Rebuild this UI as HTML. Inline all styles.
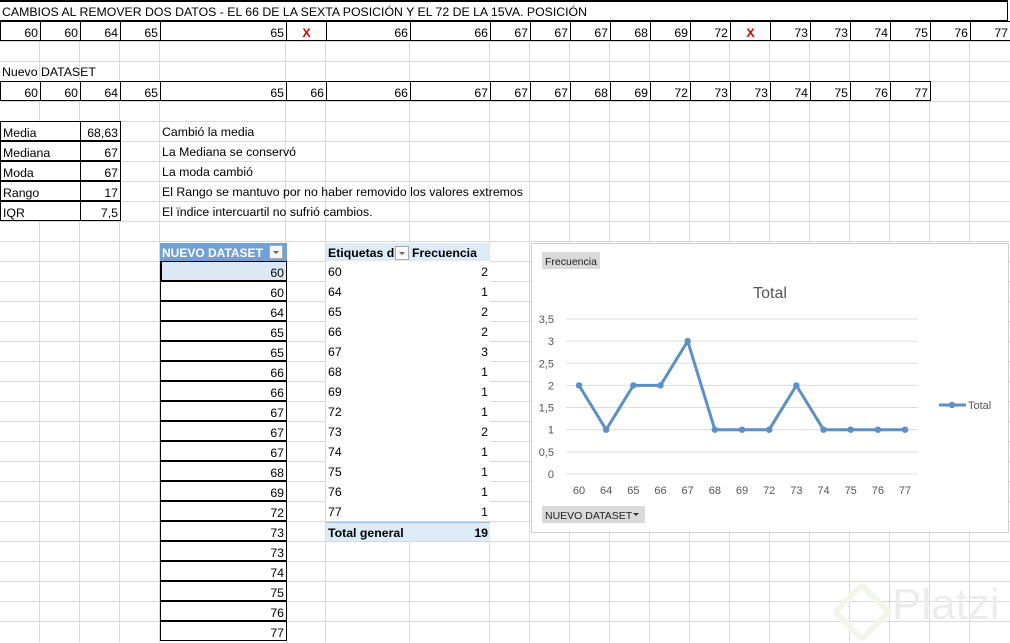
<!DOCTYPE html>
<html><head><meta charset="utf-8">
<style>
html,body{margin:0;padding:0;}
body{width:1010px;height:642px;position:relative;overflow:hidden;background:#fff;font-family:"Liberation Sans",Arial,sans-serif;font-size:12.3px;color:#000;}
.v{position:absolute;top:0;width:1px;height:642px;background:#d9d9d9;}
.h{position:absolute;left:0;height:1px;width:1010px;background:#d9d9d9;}
.c{position:absolute;height:20px;line-height:23px;box-sizing:border-box;white-space:nowrap;overflow:hidden;}
.r{text-align:right;padding-right:2px;}
.l{padding-left:2px;}
.b{border:1px solid #000;}
</style></head><body>
<div id="g"></div>
<script>
var X=[0,40,80,120,160,286,326,410,490,530,570,610,650,690,730,770,810,850,890,930,970,1010];
var g=document.getElementById('g'),h='';
for(var i=1;i<X.length-1;i++)h+='<div class="v" style="left:'+(X[i]-1)+'px"></div>';
for(var y=22;y<642;y+=20)h+='<div class="h" style="top:'+(y-1)+'px"></div>';
function cell(c1,c2,row,txt,cls,st){var top=2+20*(row-1);h+='<div class="c '+(cls||'')+'" style="left:'+X[c1]+'px;width:'+(X[c2]-X[c1]+1)+'px;top:'+(top-1)+'px;'+(st||'')+'">'+txt+'</div>';}
h+='<div style="position:absolute;left:0;top:0;width:1008px;height:21px;border-top:2px solid #000;border-bottom:1px solid #000;border-right:1px solid #000;background:#fff;box-sizing:border-box"></div>';
h+='<div class="c l" style="left:0;top:1px;line-height:22px">CAMBIOS AL REMOVER DOS DATOS - EL 66 DE LA SEXTA POSICIÓN Y EL 72 DE LA 15VA. POSICIÓN</div>';
var r2=['60','60','64','65','65','X','66','66','67','67','67','68','69','72','X','73','73','74','75','76','77'];
for(var i=0;i<21;i++){if(r2[i]=='X')cell(i,i+1,2,'X','b','text-align:center;color:#e00000;font-weight:bold;background:#fff');else cell(i,i+1,2,r2[i],'b r','background:#fff');}
cell(0,3,4,'Nuevo DATASET','l');
var r5=['60','60','64','65','65','66','66','67','67','67','68','69','72','73','73','74','75','76','77'];
for(var i=0;i<19;i++)cell(i,i+1,5,r5[i],'b r','background:#fff');
var st=[['Media','68,63','Cambió la media'],['Mediana','67','La Mediana se conservó'],['Moda','67','La moda cambió'],['Rango','17','El Rango se mantuvo por no haber removido los valores extremos'],['IQR','7,5','El ïndice intercuartil no sufrió cambios.']];
for(var i=0;i<5;i++){cell(0,2,7+i,st[i][0],'b l','background:#fff');cell(2,3,7+i,st[i][1],'b r','background:#fff');cell(4,5,7+i,st[i][2],'l','overflow:visible');}
h+='<div class="c" style="left:160px;top:243px;width:127px;height:19px;line-height:21px;background:#6fa0d6;color:#fff;font-weight:bold;padding-left:2px;font-size:12px">NUEVO DATASET<span style="position:absolute;left:109px;top:2px;width:14px;height:14px;background:#f4f4f4;border:1px solid #aaa;box-sizing:border-box"><span style="position:absolute;left:3px;top:5px;border-left:3px solid transparent;border-right:3px solid transparent;border-top:3px solid #666"></span></span></div>';
h+='<div style="position:absolute;left:269px;top:245px;width:14px;height:14px;background:#f4f4f4;border:1px solid #aaa;box-sizing:border-box"><span style="position:absolute;left:3px;top:5px;border-left:3px solid transparent;border-right:3px solid transparent;border-top:3px solid #666"></span></div>';
var nd=['60','60','64','65','65','66','66','67','67','67','68','69','72','73','73','74','75','76','77'];
for(var i=0;i<19;i++)cell(4,5,14+i,nd[i],'b r','background:'+(i==0?'#dde8f5;border-left:2px solid #000':'#fff'));
h+='<div style="position:absolute;left:326px;top:243px;width:164px;height:19px;background:#ddebf7"></div>';
h+='<div class="c" style="left:328px;top:243px;line-height:21px;font-weight:bold;width:66px">Etiquetas de</div>';
h+='<span style="position:absolute;left:395px;top:246px;width:14px;height:14px;background:#fafafa;border:1px solid #aaa;box-sizing:border-box"><span style="position:absolute;left:3px;top:5px;border-left:3px solid transparent;border-right:3px solid transparent;border-top:3px solid #666"></span></span>';
h+='<div class="c" style="left:412px;top:243px;line-height:21px;font-weight:bold">Frecuencia</div>';
var pv=[['60',2],['64',1],['65',2],['66',2],['67',3],['68',1],['69',1],['72',1],['73',2],['74',1],['75',1],['76',1],['77',1]];
for(var i=0;i<13;i++){cell(6,7,14+i,pv[i][0],'l','background:#fff;width:84px');cell(7,8,14+i,''+pv[i][1],'r','background:#fff;width:80px');}
h+='<div style="position:absolute;left:326px;top:522px;width:164px;height:19px;background:#ddebf7;border-top:1px solid #9bc2e6;box-sizing:border-box"></div>';
h+='<div class="c l" style="left:326px;top:522px;font-weight:bold">Total general</div>';
h+='<div class="c r" style="left:410px;width:80px;top:522px;font-weight:bold">19</div>';
var d=[2,1,2,2,3,1,1,1,2,1,1,1,1],lab=['60','64','65','66','67','68','69','72','73','74','75','76','77'];
var s='<svg style="position:absolute;left:531px;top:243px" width="478" height="290" viewBox="531 243 478 290"><rect x="531.5" y="243.5" width="477" height="289" fill="#fff" stroke="#d0d0d0"/>';
s+='<rect x="542" y="252" width="58" height="17" fill="#d9d9d9"/><text x="545" y="265" font-size="10.5" font-family="Liberation Sans" fill="#222">Frecuencia</text>';
s+='<text x="770" y="298" font-size="16" font-family="Liberation Sans" fill="#555" text-anchor="middle">Total</text>';
var yl=['0','0,5','1','1,5','2','2,5','3','3,5'];
for(var i=0;i<8;i++){var yy=474-i*22.15;s+='<line x1="566" x2="918" y1="'+yy+'" y2="'+yy+'" stroke="#dcdcdc"/>';s+='<text x="554" y="'+(yy+4)+'" font-size="11" font-family="Liberation Sans" fill="#555" text-anchor="end">'+yl[i]+'</text>';}
var pts=[];for(var i=0;i<13;i++){var xx=579+i*27.17,yy=474-d[i]*44.3;pts.push(xx+','+yy);s+='<text x="'+xx+'" y="494" font-size="11" font-family="Liberation Sans" fill="#555" text-anchor="middle">'+lab[i]+'</text>';}
s+='<polyline points="'+pts.join(' ')+'" fill="none" stroke="#5b8fc7" stroke-width="3" stroke-linejoin="round"/>';
for(var i=0;i<13;i++){var p=pts[i].split(',');s+='<circle cx="'+p[0]+'" cy="'+p[1]+'" r="3.2" fill="#5b8fc7"/>';}
s+='<line x1="939" x2="966" y1="405" y2="405" stroke="#5b8fc7" stroke-width="3"/><circle cx="952" cy="405" r="3.2" fill="#5b8fc7"/><text x="968" y="409" font-size="11" font-family="Liberation Sans" fill="#555">Total</text>';
s+='<rect x="542" y="506" width="103" height="17" fill="#d9d9d9"/><text x="545" y="519" font-size="10.5" font-family="Liberation Sans" fill="#222">NUEVO DATASET</text><path d="M633 513 l6 0 l-3 3 z" fill="#333"/>';
s+='</svg>';
h+=s;
h+='<div style="position:absolute;left:892px;top:580px;font-size:44px;color:#ececec;font-family:Liberation Sans">Platzi</div>';
h+='<div style="position:absolute;left:840px;top:590px;width:32px;height:32px;border:6px solid #f2f6e8;transform:rotate(45deg);border-radius:6px"></div>';
g.innerHTML=h;
</script>
</body></html>
